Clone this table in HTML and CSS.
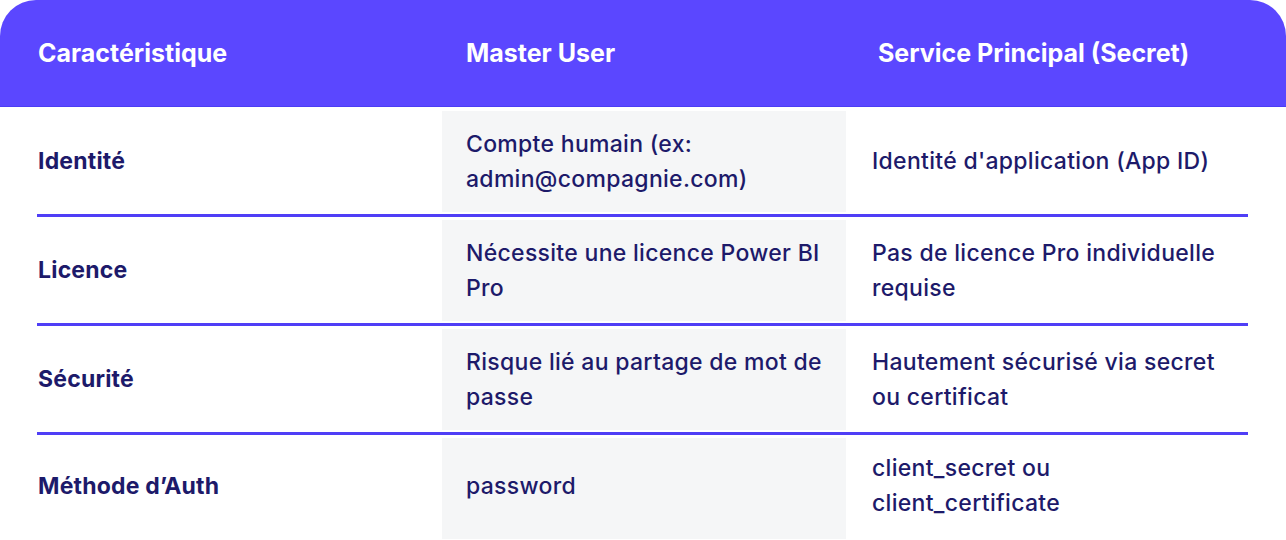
FILE: index.html
```html
<!DOCTYPE html>
<html lang="fr">
<head>
<meta charset="utf-8">
<title>Master User vs Service Principal</title>
<link rel="stylesheet" href="styles.css">
</head>
<body>
<div class="table">
  <div class="head">
    <div class="h h1">Caractéristique</div>
    <div class="h h2">Master User</div>
    <div class="h h3">Service Principal (Secret)</div>
  </div>
  <div class="rows">
    <div class="row">
      <div class="cell key">Identité</div>
      <div class="cell mid">Compte humain (ex: admin@compagnie.com)</div>
      <div class="cell last">Identité d'application (App ID)</div>
    </div>
    <div class="row">
      <div class="cell key">Licence</div>
      <div class="cell mid">Nécessite une licence Power BI Pro</div>
      <div class="cell last">Pas de licence Pro individuelle requise</div>
    </div>
    <div class="row">
      <div class="cell key">Sécurité</div>
      <div class="cell mid">Risque lié au partage de mot de passe</div>
      <div class="cell last">Hautement sécurisé via secret ou certificat</div>
    </div>
    <div class="row">
      <div class="cell key">Méthode d’Auth</div>
      <div class="cell mid">password</div>
      <div class="cell last">client_secret ou client_certificate</div>
    </div>
  </div>
</div>
</body>
</html>
```

FILE: styles.css
```css
html, body {
  margin: 0;
  padding: 0;
  background: #ffffff;
}
body {
  width: 1286px;
  height: 540px;
  overflow: hidden;
  font-family: "Inter", "Noto Sans", sans-serif;
}
.table {
  width: 1286px;
}
.head {
  display: grid;
  grid-template-columns: 442px 404px 1fr;
  align-items: center;
  height: 106px;
  background: #5b47ff;
  border-radius: 36px 36px 0 0;
  border-bottom: 1px solid #4c3df4;
}
.h {
  color: #ffffff;
  font-weight: 700;
  font-size: 25px;
  letter-spacing: 0;
}
.h1 { padding-left: 38px; }
.h2 { padding-left: 24px; }
.h3 { padding-left: 32px; }
.rows {
  margin-left: 37px;
  width: 1211px;
}
.row {
  display: grid;
  grid-template-columns: 405px 404px 1fr;
  padding: 3px 0 2px;
  border-bottom: 3px solid #4f3ef6;
}
.row:first-child {
  padding-top: 4px;
}
.row:last-child {
  border-bottom: none;
}
.row:last-child .cell {
  height: 96px;
}
.cell {
  height: 101px;
  display: flex;
  align-items: center;
  color: #1d1a6a;
  font-size: 23px;
  font-weight: 500;
  letter-spacing: 0.3px;
  line-height: 35px;
}
.key {
  padding-left: 1px;
  font-weight: 700;
  letter-spacing: 0.2px;
}
.mid {
  background: #f5f6f7;
  padding: 0 12px 0 24px;
}
.row:last-child .mid {
  height: 101px;
  padding-bottom: 5px;
  box-sizing: border-box;
}
.last {
  padding: 0 26px 0 26px;
}
```
